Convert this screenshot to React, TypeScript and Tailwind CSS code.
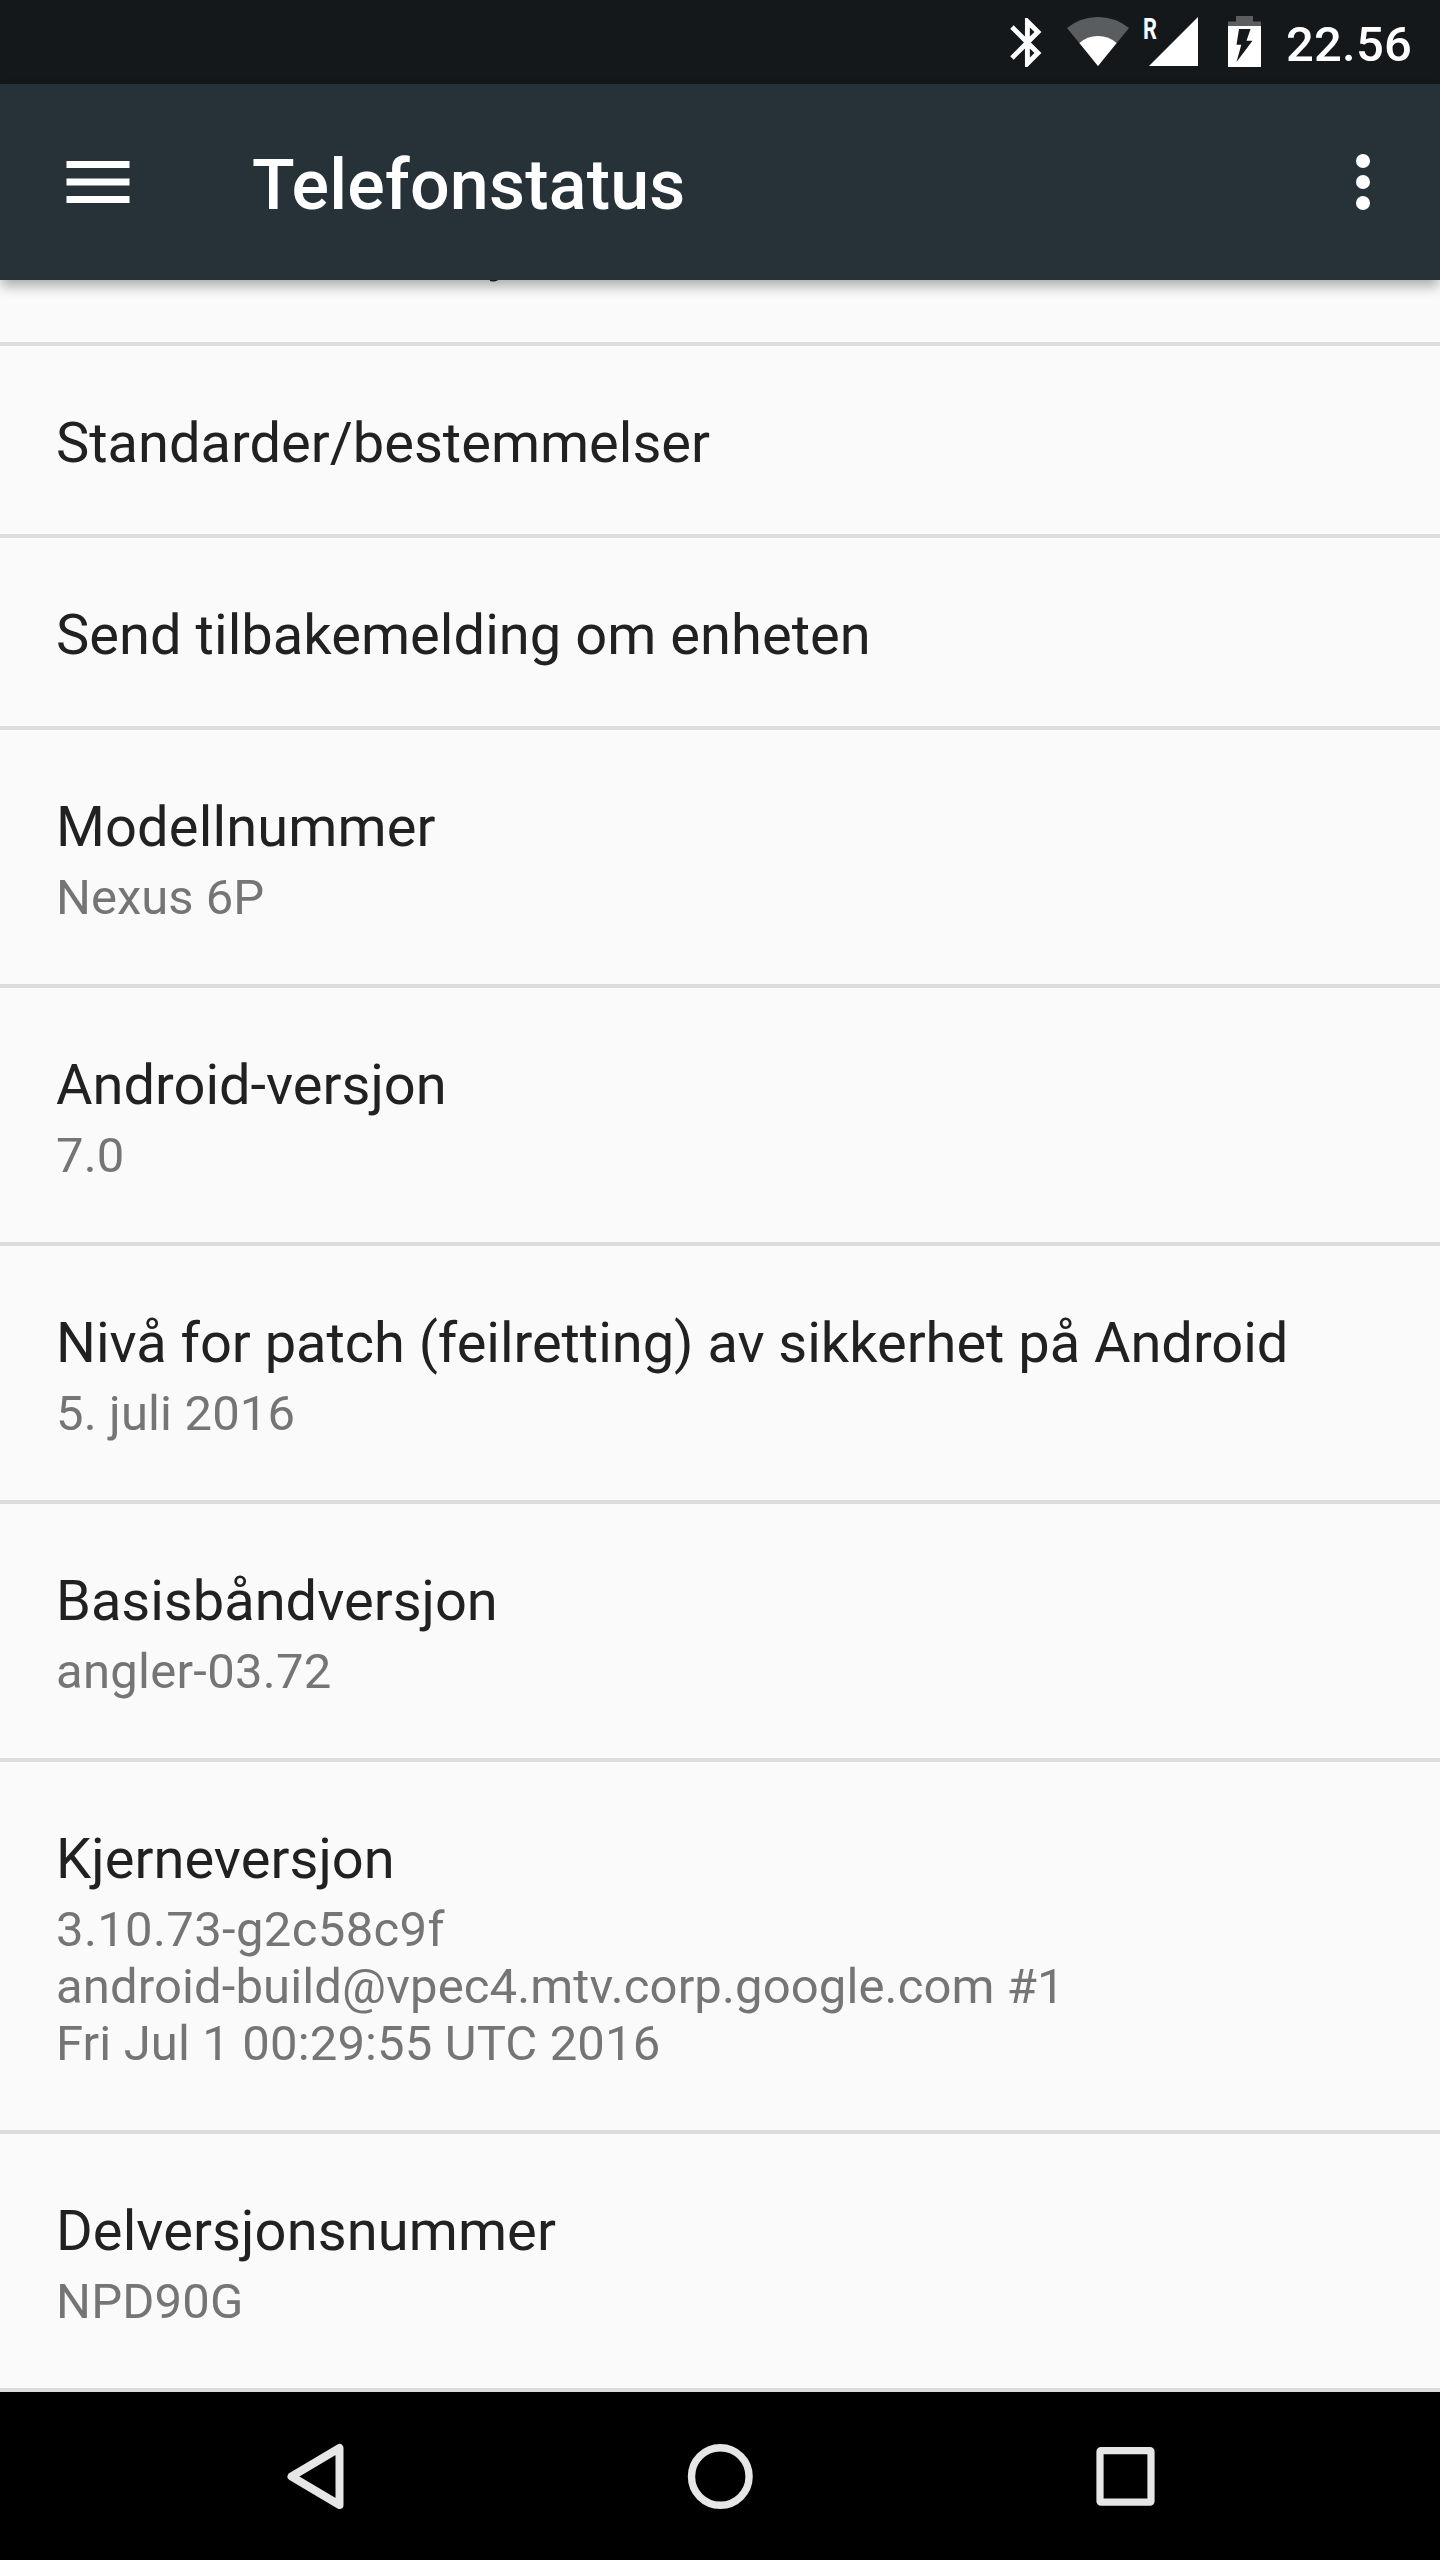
import clsx from 'clsx'

type Tekst = {
  tekst: string
  tracking?: string
}

type Oppforing = {
  tittel: Tekst
  linjer?: Tekst[]
}

const OPPFORINGER: Oppforing[] = [
  { tittel: { tekst: 'Juridisk informasjon', tracking: 'tracking-[0.1px]' } },
  { tittel: { tekst: 'Standarder/bestemmelser' } },
  { tittel: { tekst: 'Send tilbakemelding om enheten', tracking: 'tracking-[0.05px]' } },
  {
    tittel: { tekst: 'Modellnummer', tracking: 'tracking-[0.14px]' },
    linjer: [{ tekst: 'Nexus 6P' }],
  },
  {
    tittel: { tekst: 'Android-versjon' },
    linjer: [{ tekst: '7.0', tracking: 'tracking-[0.2px]' }],
  },
  {
    tittel: { tekst: 'Nivå for patch (feilretting) av sikkerhet på Android', tracking: 'tracking-[-0.03px]' },
    linjer: [{ tekst: '5. juli 2016', tracking: 'tracking-[0.14px]' }],
  },
  {
    tittel: { tekst: 'Basisbåndversjon' },
    linjer: [{ tekst: 'angler-03.72', tracking: 'tracking-[0.27px]' }],
  },
  {
    tittel: { tekst: 'Kjerneversjon', tracking: 'tracking-[0.06px]' },
    linjer: [
      { tekst: '3.10.73-g2c58c9f', tracking: 'tracking-[0.36px]' },
      { tekst: 'android-build@vpec4.mtv.corp.google.com #1', tracking: 'tracking-[0.12px]' },
      { tekst: 'Fri Jul 1 00:29:55 UTC 2016', tracking: 'tracking-[0.14px]' },
    ],
  },
  {
    tittel: { tekst: 'Delversjonsnummer', tracking: 'tracking-[0.1px]' },
    linjer: [{ tekst: 'NPD90G', tracking: 'tracking-[0.2px]' }],
  },
]

export default function App() {
  return (
    <div className="flex h-[2560px] w-[1440px] flex-col overflow-hidden bg-[#fafafa] font-['Roboto',sans-serif]">
      <StatusBar />
      <AppBar />
      <main className="flex-1 overflow-hidden">
        {/* the list is scrolled, so the first row sits mostly behind the app bar */}
        <ul className="-mt-[126px]">
          {OPPFORINGER.map((o) => (
            <Rad key={o.tittel.tekst} {...o} />
          ))}
        </ul>
      </main>
      <NavBar />
    </div>
  )
}

function Rad({ tittel, linjer }: Oppforing) {
  return (
    <li className="border-b-4 border-[#dcdcdc] px-[56px] pt-[64px] pb-[58px]">
      <div className={clsx('text-[56px] leading-[66px] whitespace-nowrap text-[#212121]', tittel.tracking)}>
        {tittel.tekst}
      </div>
      {linjer && (
        <div className="mt-[9px] text-[49px] leading-[57px] whitespace-nowrap text-[#757575]">
          {linjer.map((l) => (
            <div key={l.tekst} className={l.tracking}>
              {l.tekst}
            </div>
          ))}
        </div>
      )}
    </li>
  )
}

function StatusBar() {
  return (
    <div className="flex h-[84px] shrink-0 justify-end bg-[#14181b] pr-[28px] text-white">
      {/* Bluetooth */}
      <svg viewBox="0 0 32 84" fill="currentColor" className="h-[84px] w-[32px]">
        <path
          transform="translate(-12 13.1) scale(2.45)"
          d="M17.71 7.71L12 2h-1v7.59L6.41 5 5 6.41 10.59 12 5 17.59 6.41 19 11 14.41V22h1l5.71-5.71-4.3-4.29 4.3-4.29zM13 5.83l1.88 1.88L13 9.59V5.83zm1.88 10.46L13 18.17v-3.76l1.88 1.88z"
        />
      </svg>
      {/* Wi-Fi */}
      <svg viewBox="0 0 62 84" fill="currentColor" className="ml-[25px] h-[84px] w-[62px]">
        <path fillOpacity="0.3" d="M31 66L0 28Q13.500 17 31 17T62 28z" />
        <path d="M31 66L12.400 43.100Q20 36 31 36T49.600 43.100z" />
      </svg>
      {/* Mobile signal, roaming */}
      <svg viewBox="0 0 56 84" fill="currentColor" className="ml-[14px] h-[84px] w-[56px]">
        <text transform="translate(0 39) scale(0.74 1)" fontSize="29.500" fontWeight="700">
          R
        </text>
        <path d="M6 66L55 17V66z" />
      </svg>
      {/* Battery, charging */}
      <svg viewBox="0 0 33 84" className="ml-[29px] h-[84px] w-[33px]">
        <path fill="#5b5d5f" d="M8 16H25V21.500H33V26H0V21.500H8z" />
        <path fill="#fff" d="M0 26H33V67H0z" />
        <path fill="#14181b" d="M11 29H22.500L18.500 40.700H24.500L8.500 62L13.300 44.700H8.500z" />
      </svg>
      <div className="ml-[25px] w-[126px] pt-[16px] text-[49px] leading-[57px] font-medium tracking-[0.2px] whitespace-nowrap">
        22.56
      </div>
    </div>
  )
}

function AppBar() {
  return (
    <header className="relative z-10 flex h-[196px] shrink-0 items-center bg-[#263238] pr-[35px] pl-[56px] text-white shadow-[0_7px_12px_-1px_rgba(0,0,0,0.32)]">
      <svg viewBox="0 0 24 24" fill="currentColor" className="size-[84px]">
        <path d="M3 18h18v-2H3v2zm0-5h18v-2H3v2zm0-7v2h18V6H3z" />
      </svg>
      <h1 className="ml-[112px] flex-1 pt-[6px] text-[70px] leading-[82px] font-medium tracking-[0.2px]">
        Telefonstatus
      </h1>
      <svg viewBox="0 0 24 24" fill="currentColor" className="size-[84px]">
        <circle cx="12" cy="6" r="2" />
        <circle cx="12" cy="12" r="2" />
        <circle cx="12" cy="18" r="2" />
      </svg>
    </header>
  )
}

function NavBar() {
  return (
    <nav className="flex h-[168px] shrink-0 items-center justify-center gap-[321px] bg-black text-[#e6e6e6]">
      <svg viewBox="0 0 84 84" fill="none" stroke="currentColor" strokeLinejoin="round" className="size-[84px]">
        <path strokeWidth="8" d="M18.500 42.500L66.500 14V71z" />
      </svg>
      <svg viewBox="0 0 84 84" fill="none" stroke="currentColor" className="size-[84px]">
        <circle cx="42.300" cy="42.500" r="28.800" strokeWidth="7.400" />
      </svg>
      <svg viewBox="0 0 84 84" fill="none" stroke="currentColor" strokeLinejoin="round" className="size-[84px]">
        <rect x="17" y="16.600" width="51" height="51.600" rx="1" strokeWidth="7.200" />
      </svg>
    </nav>
  )
}
